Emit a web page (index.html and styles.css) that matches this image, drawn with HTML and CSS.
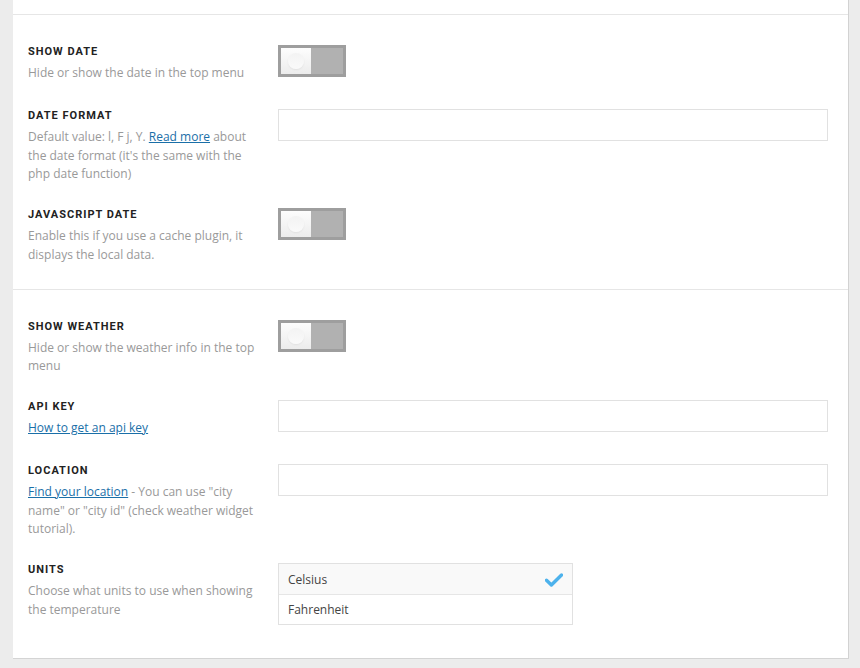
FILE: index.html
```html
<!DOCTYPE html>
<html lang="en">
  <head>
    <meta charset="UTF-8" />
    <title>Top bar settings</title>
    <link rel="stylesheet" href="styles.css">
  </head>
  <body>
    <div class="panel">
      <div class="panel-top"></div>

      <div class="section">
        <div class="option">
          <div class="option-info">
            <div class="option-title">Show date</div>
            <div class="option-desc">Hide or show the date in the top menu</div>
          </div>
          <div class="option-control">
            <div class="toggle"><span class="knob"></span></div>
          </div>
        </div>

        <div class="option">
          <div class="option-info">
            <div class="option-title">Date format</div>
            <div class="option-desc">
              Default value: l, F j, Y. <a href="#">Read more</a> about the date format (it's the same with the php date function)
            </div>
          </div>
          <div class="option-control">
            <input type="text" class="text-input" />
          </div>
        </div>

        <div class="option">
          <div class="option-info">
            <div class="option-title">Javascript date</div>
            <div class="option-desc">Enable this if you use a cache plugin, it displays the local data.</div>
          </div>
          <div class="option-control">
            <div class="toggle"><span class="knob"></span></div>
          </div>
        </div>
      </div>

      <div class="section">
        <div class="option">
          <div class="option-info">
            <div class="option-title">Show weather</div>
            <div class="option-desc">Hide or show the weather info in the top menu</div>
          </div>
          <div class="option-control">
            <div class="toggle"><span class="knob"></span></div>
          </div>
        </div>

        <div class="option">
          <div class="option-info">
            <div class="option-title">Api key</div>
            <div class="option-desc"><a href="#">How to get an api key</a></div>
          </div>
          <div class="option-control">
            <input type="text" class="text-input" />
          </div>
        </div>

        <div class="option">
          <div class="option-info">
            <div class="option-title">Location</div>
            <div class="option-desc">
              <a href="#">Find your location</a> - You can use "city name" or "city id" (check weather widget tutorial).
            </div>
          </div>
          <div class="option-control">
            <input type="text" class="text-input" />
          </div>
        </div>

        <div class="option">
          <div class="option-info">
            <div class="option-title">Units</div>
            <div class="option-desc">Choose what units to use when showing the temperature</div>
          </div>
          <div class="option-control">
            <ul class="choice-list">
              <li class="choice selected">
                Celsius
                <svg class="check" width="18" height="14" viewBox="0 0 18 14">
                  <path d="M1.5 7.2 L6.4 12 L16.5 2" fill="none" stroke="#4db2ec" stroke-width="3.4" stroke-linecap="round" stroke-linejoin="round" />
                </svg>
              </li>
              <li class="choice">Fahrenheit</li>
            </ul>
          </div>
        </div>
      </div>
    </div>
  </body>
</html>
```

FILE: styles.css
```css
:root {
  --page-bg: #ececec;
  --line: #e6e6e6;
  --title-color: #222;
  --desc-color: #999;
  --link-color: #1a6fa8;
}

* {
  margin: 0;
  padding: 0;
  box-sizing: border-box;
}

body {
  background-color: var(--page-bg);
  padding: 0 11px 9px 13px;
  font-family: "Open Sans", "Liberation Sans", sans-serif;
}

.panel {
  background-color: #fff;
  width: 836px;
  border-right: 1px solid #d2d2d2;
  box-shadow: 0 1px 0 #d4d4d4;
  padding-bottom: 9px;
}

.panel-top {
  height: 15px;
  border-bottom: 1px solid var(--line);
}

.section {
  padding: 30px 0 0 15px;
}

.section + .section {
  border-top: 1px solid var(--line);
}

.option {
  display: flex;
  align-items: flex-start;
  min-height: 40px;
  margin-bottom: 24px;
}

.option-info {
  width: 250px;
  flex-shrink: 0;
  padding-right: 20px;
}

.option-title {
  font-family: Roboto, "Liberation Sans", sans-serif;
  font-weight: 700;
  font-size: 11px;
  line-height: 13px;
  letter-spacing: 1px;
  text-transform: uppercase;
  color: var(--title-color);
}

.option-desc {
  margin-top: 6px;
  font-size: 12px;
  line-height: 18.7px;
  color: var(--desc-color);
}

.option-desc a {
  color: var(--link-color);
  text-decoration: underline;
}

.option-control {
  flex: 1;
  padding-right: 20px;
}

.toggle {
  width: 68px;
  height: 32px;
  background-color: #b1b1b1;
  border: 3px solid #9e9e9e;
}

.knob {
  display: block;
  width: 30px;
  height: 26px;
  background: linear-gradient(#fdfdfd, #ececec);
  position: relative;
}

.knob::after {
  content: "";
  position: absolute;
  left: 7px;
  top: 5px;
  width: 16px;
  height: 16px;
  border-radius: 50%;
  background: linear-gradient(#f3f3f3, #fafafa);
  box-shadow: 0 1px 2px rgba(0, 0, 0, 0.06);
}

.text-input {
  display: block;
  width: 550px;
  height: 32px;
  border: 1px solid #e1e1e1;
  background-color: #fff;
  padding: 0 10px;
  font-size: 13px;
}

.choice-list {
  list-style: none;
  width: 295px;
  border: 1px solid #e1e1e1;
}

.choice {
  height: 30px;
  padding: 0 9px;
  display: flex;
  align-items: center;
  justify-content: space-between;
  font-size: 12px;
  color: #444;
}

.choice + .choice {
  border-top: 1px solid #e6e6e6;
}

.choice.selected {
  background-color: #f9f9f9;
}

.check {
  display: block;
  margin-top: 1px;
}
```
